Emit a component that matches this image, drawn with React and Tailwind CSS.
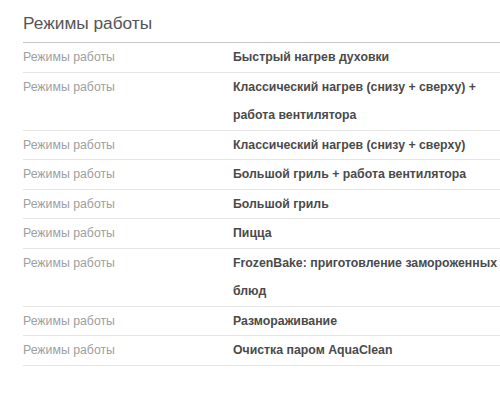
export default function App() {
  const rows = [
    "Быстрый нагрев духовки",
    "Классический нагрев (снизу + сверху) + работа вентилятора",
    "Классический нагрев (снизу + сверху)",
    "Большой гриль + работа вентилятора",
    "Большой гриль",
    "Пицца",
    "FrozenBake: приготовление замороженных блюд",
    "Размораживание",
    "Очистка паром AquaClean",
  ];
  return (
    <div className="w-[500px] h-[393px] bg-white pl-[23px] overflow-hidden" style={{ fontFamily: '"Liberation Sans", Arial, sans-serif' }}>
      <div className="pt-[12px] pb-[8px] text-[17.3px] leading-[22px] text-[#555]">Режимы работы</div>
      <div className="border-t border-[#c8c8c8]">
        {rows.map((r, i) => (
          <div key={i} className="grid grid-cols-[210px_1fr] border-b border-[#e6e6e6] text-[12.3px] leading-[28.5px]">
            <div className="text-[#a0a0a0]">Режимы работы</div>
            <div className="font-bold text-[#4a4a4a] pr-[1px]">{r}</div>
          </div>
        ))}
      </div>
    </div>
  );
}
